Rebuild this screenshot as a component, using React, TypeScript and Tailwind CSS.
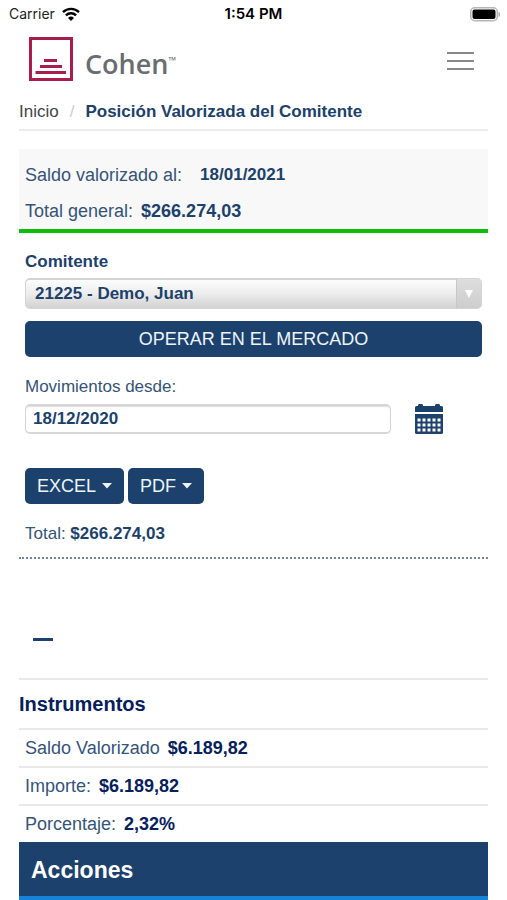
import { useState } from "react";
import type { ReactNode } from "react";

const holes = [0, 1, 2].flatMap((row) => [0, 1, 2, 3, 4].map((col) => ({ row, col })));

function StatusBar() {
  return (
    <div className="grid h-7 grid-cols-3 items-center px-[7px] font-['Inter','Liberation_Sans',sans-serif] text-sm leading-7 text-black">
      <div className="flex items-center gap-[7px] pl-[2px]">
        <span className="text-[#222]">Carrier</span>
        <svg width="18" height="14" viewBox="0 0 18 14" fill="none" stroke="#000" strokeWidth="2.4" aria-hidden="true">
          <path d="M1 5.2a11.4 11.4 0 0 1 16 0" />
          <path d="M3.9 8.3a7.3 7.3 0 0 1 10.2 0" />
          <path d="M9 14 6 10.9a4.3 4.3 0 0 1 6 0Z" fill="#000" stroke="none" />
        </svg>
      </div>
      <span className="text-center text-[15px] font-semibold">1:54 PM</span>
      <svg className="justify-self-end" width="30" height="15" viewBox="0 0 30 15" aria-hidden="true">
        <rect x="0.75" y="0.75" width="26.5" height="13" rx="4" fill="#fff" stroke="#b5b5b5" strokeWidth="1.5" />
        <rect x="2.500" y="2.500" width="23" height="9.500" rx="2" fill="#000" />
        <path d="M28.500 5v5a2.6 2.6 0 0 0 0-5Z" fill="#a9a9a9" />
      </svg>
    </div>
  );
}

function Header() {
  return (
    <header className="flex items-start justify-between pb-[14px] pl-[29px] pr-[33px] pt-[9px]">
      <a href="#inicio" className="flex items-start gap-3">
        <svg width="44" height="44" viewBox="0 0 44 44" aria-hidden="true">
          <rect x="1.5" y="1.5" width="41" height="41" fill="#fff" stroke="#a91d4c" strokeWidth="3" />
          <path d="M15 22h13v3H15zM11 28h22v3H11zM6.500 34H37v3H6.500z" fill="#a91d4c" />
        </svg>
        <span className="flex items-start pt-[9px] font-['Open_Sans','Noto_Sans',sans-serif] text-[#6a6c6f]">
          <span className="text-[27px] font-semibold leading-9">Cohen</span>
          <span className="pt-2 text-[10px] leading-3">™</span>
        </span>
      </a>
      <button type="button" aria-label="Menú" className="mt-[15px] flex w-[27px] flex-col gap-[6px]">
        <span className="h-[2px] w-full bg-[#888]" />
        <span className="h-[2px] w-full bg-[#888]" />
        <span className="h-[2px] w-full bg-[#888]" />
      </button>
    </header>
  );
}

function CalendarIcon() {
  return (
    <svg width="28" height="30" viewBox="0 0 28 30" aria-hidden="true">
      <path d="M1.500 2H3a2.500 2.500 0 0 1 5 0h12a2.500 2.500 0 0 1 5 0h1.500Q28 2 28 3.500V8H0V3.500Q0 2 1.500 2Z" fill="#1c416c" />
      <path d="M0 10h28v18.500q0 1.500-1.500 1.500h-25Q0 30 0 28.500Z" fill="#1c416c" />
      {holes.map(({ row, col }) => (
        <rect key={row + "-" + col} x={2.5 + col * 5} y={14.5 + row * 5} width="3" height="3" fill="#fff" />
      ))}
    </svg>
  );
}

function ExportButton({ children }: { children: ReactNode }) {
  return (
    <button type="button" className="flex h-9 items-center gap-[6px] rounded-[5px] bg-[#1c416c] px-3 text-lg text-[#edf4fb]">
      {children}
      <svg width="10" height="6" viewBox="0 0 10 6" fill="currentColor" aria-hidden="true">
        <path d="M0 0h10L5 5.500Z" />
      </svg>
    </button>
  );
}

function InstrumentRow({ label, value }: { label: string; value: string }) {
  return (
    <div className="flex h-[38px] items-center gap-2 border-t-2 border-[#e9e9e9] px-[6px] text-lg">
      <dt>{label}</dt>
      <dd className="font-bold text-[#06205c]">{value}</dd>
    </div>
  );
}

export default function App() {
  const [account, setAccount] = useState("21225");
  const [since, setSince] = useState("18/12/2020");

  return (
    <div className="bg-white font-['Liberation_Sans',Arial,sans-serif] text-base text-[#345479]">
      <StatusBar />
      <Header />
      <main className="px-[19px]">
        <nav aria-label="Ruta" className="flex h-[35px] items-start border-b-2 border-[#ebebeb] pt-1 text-[17px] leading-6">
          <a href="#inicio" className="text-[#444]">Inicio</a>
          <span className="px-[11px] text-[#ccc]">/</span>
          <span className="font-bold text-[#1c416c]">Posición Valorizada del Comitente</span>
        </nav>

        <section className="mt-[18px] border-b-4 border-[#0cbd0c] bg-[#f8f8f8] px-[6px] pt-2 text-lg leading-9">
          <p className="flex gap-[18px]">
            <span>Saldo valorizado al:</span>
            <strong className="text-[17px] text-[#1c416c]">18/01/2021</strong>
          </p>
          <p className="flex gap-2">
            <span>Total general:</span>
            <strong className="text-[#1c416c]">$266.274,03</strong>
          </p>
        </section>

        <section className="px-[6px] pt-[17px]">
          <label htmlFor="comitente" className="block text-[17px] font-bold leading-6 text-[#1c416c]">
            Comitente
          </label>
          <div className="relative mt-1">
            <select
              id="comitente"
              value={account}
              onChange={(e) => setAccount(e.target.value)}
              className="block h-[31px] w-full appearance-none rounded-[5px] border border-b-2 border-t-2 border-[#d4d4d4] bg-linear-to-b from-white via-[#ededed] to-[#d0d0d0] bg-origin-border pl-[9px] pr-8 text-[17px] font-bold text-[#1c416c]"
            >
              <option value="21225">21225 - Demo, Juan</option>
            </select>
            <span className="pointer-events-none absolute inset-y-px right-px flex w-[25px] items-center justify-center rounded-r-[4px] border-l border-[#c8c8c8] bg-linear-to-b from-[#dedede] to-[#cdcdcd] text-white">
              <svg width="8" height="8" viewBox="0 0 8 8" fill="currentColor" aria-hidden="true">
                <path d="M0 0h8L4 8Z" />
              </svg>
            </span>
          </div>

          <button type="button" className="mt-3 block h-9 w-full rounded-[5px] bg-[#1c416c] text-lg text-[#edf4fb]">
            OPERAR EN EL MERCADO
          </button>

          <label htmlFor="desde" className="mt-[18px] block text-[17px] leading-6">
            Movimientos desde:
          </label>
          <div className="mt-[5px] flex items-center pr-[39px]">
            <input
              id="desde"
              type="text"
              value={since}
              onChange={(e) => setSince(e.target.value)}
              className="h-[30px] min-w-0 flex-1 rounded-[5px] border border-b-2 border-t-2 border-[#d6d6d6] bg-white px-[7px] text-[17px] font-bold text-[#1c416c] shadow-[inset_0_1px_1px_#ddd]"
            />
            <button type="button" aria-label="Elegir fecha" className="ml-6">
              <CalendarIcon />
            </button>
          </div>

          <div className="mt-[34px] flex gap-1">
            <ExportButton>EXCEL</ExportButton>
            <ExportButton>PDF</ExportButton>
          </div>
          <p className="mt-[18px] text-[17px] leading-6">
            Total: <strong className="text-[#1c416c]">$266.274,03</strong>
          </p>
        </section>

        <hr className="mt-[11px] border-0 border-t-2 border-dotted border-[#6f87a3]" />

        <button type="button" aria-label="Contraer" className="ml-[14px] mt-[70px] flex h-5 w-5 items-center">
          <span className="h-[3px] w-full bg-[#1c416c]" />
        </button>

        <section className="mt-[29px]">
          <h2 className="h-[50px] border-t-2 border-[#e9e9e9] text-xl font-bold leading-[48px] text-[#06205c]">
            Instrumentos
          </h2>
          <dl>
            <InstrumentRow label="Saldo Valorizado" value="$6.189,82" />
            <InstrumentRow label="Importe:" value="$6.189,82" />
            <InstrumentRow label="Porcentaje:" value="2,32%" />
          </dl>
          <h3 className="h-[58px] border-b-4 border-[#1683d8] bg-[#1c416c] px-3 text-[23px] font-bold leading-[56px] text-white">
            Acciones
          </h3>
        </section>
      </main>
    </div>
  );
}
